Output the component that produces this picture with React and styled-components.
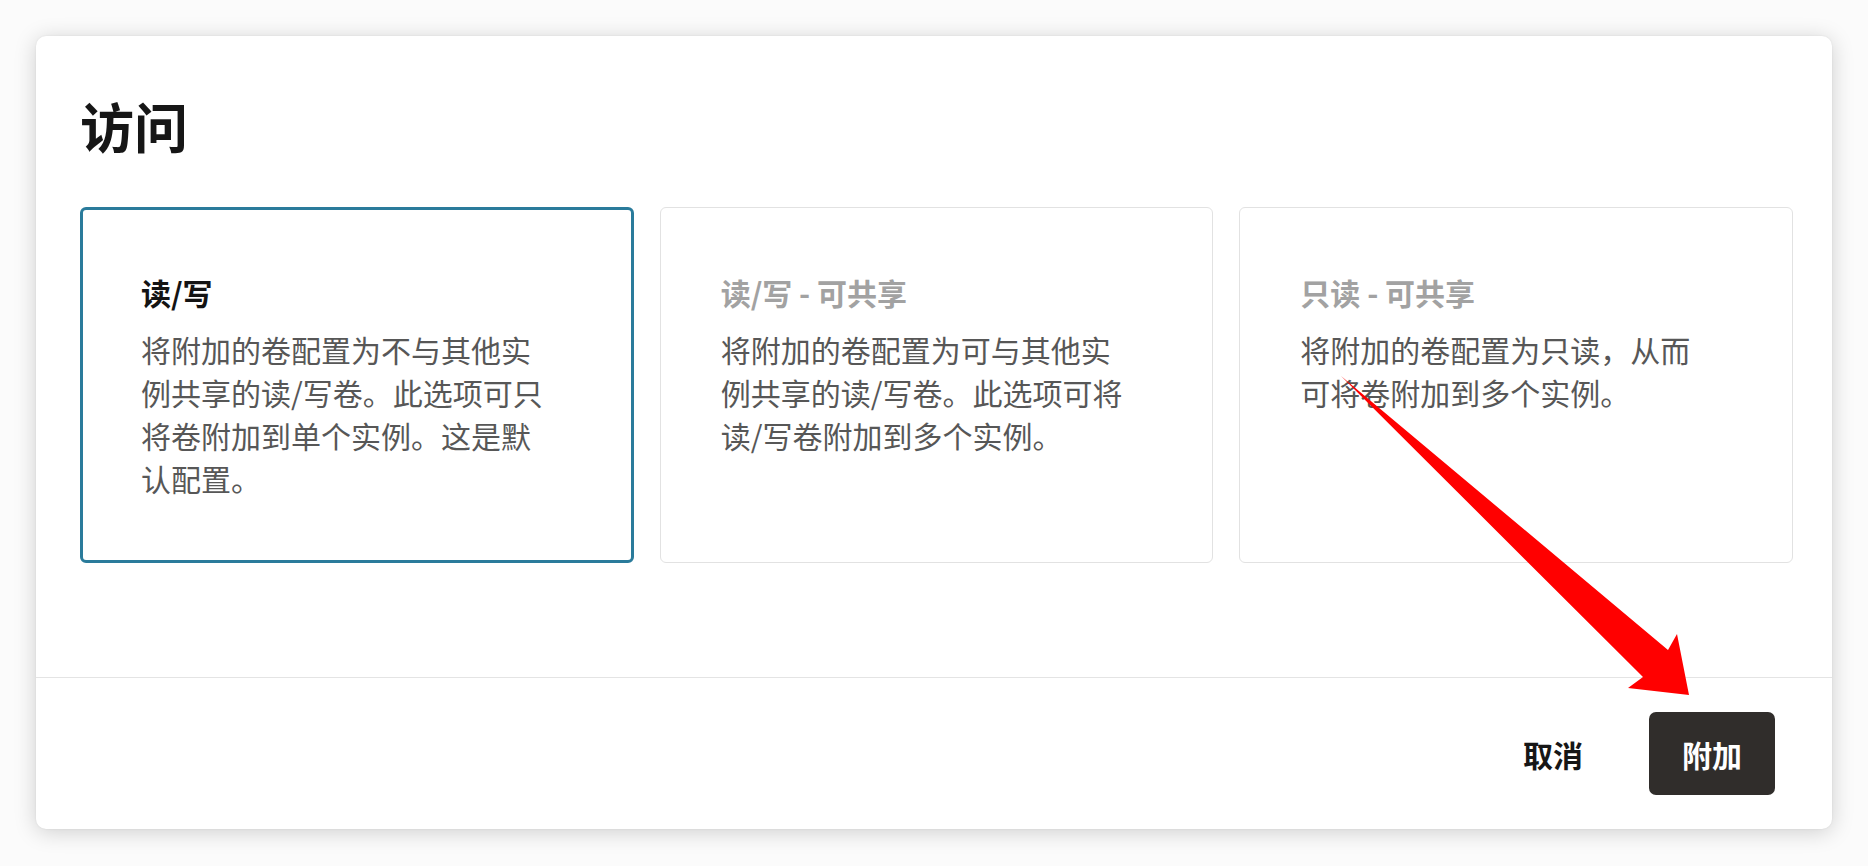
import React, {useState} from 'react';
import styled, {createGlobalStyle} from 'styled-components';

const GlobalStyle = createGlobalStyle`
  html, body {
    margin: 0;
    padding: 0;
    background-color: #fbfbfb;
    font-family: "Noto Sans CJK SC", "Noto Sans", sans-serif;
  }
`

const options = [
  {
    id: 'rw',
    title: '读/写',
    text: '将附加的卷配置为不与其他实例共享的读/写卷。此选项可只将卷附加到单个实例。这是默认配置。',
  },
  {
    id: 'rw-shared',
    title: '读/写 - 可共享',
    text: '将附加的卷配置为可与其他实例共享的读/写卷。此选项可将读/写卷附加到多个实例。',
  },
  {
    id: 'ro-shared',
    title: '只读 - 可共享',
    text: '将附加的卷配置为只读，从而可将卷附加到多个实例。',
  },
];

const App = () => {
  const [selected, setSelected] = useState('rw');

  return (
    <Page>
      <GlobalStyle />
      <Dialog>
        <Body>
          <Heading>访问</Heading>
          <OptionGrid>
            {options.map(o => {
              const active = o.id === selected;
              return (
                <OptionCard key={o.id} $active={active} onClick={() => setSelected(o.id)}>
                  <OptionTitle $active={active}>{o.title}</OptionTitle>
                  <OptionText>{o.text}</OptionText>
                </OptionCard>
              )
            })}
          </OptionGrid>
        </Body>
        <Footer>
          <CancelButton>取消</CancelButton>
          <PrimaryButton>附加</PrimaryButton>
        </Footer>
      </Dialog>
      <ArrowLayer width="1868" height="866" viewBox="0 0 1868 866">
        <polygon
          fill="#ff0000"
          points="1341,376 1668,650 1677,634 1689,695 1628,688 1643,677"
        />
      </ArrowLayer>
    </Page>
  )
}

export default App;

const Page = styled.div`
  position: relative;
  width: 1868px;
  height: 866px;
  box-sizing: border-box;
  padding: 36px;
  overflow: hidden;
`

const Dialog = styled.section`
  background-color: #ffffff;
  height: 793px;
  border-radius: 10px;
  box-shadow: 0 3px 22px rgba(0, 0, 0, .18), 0 0 2px rgba(0, 0, 0, .08);

  display: flex;
  flex-direction: column;
`

const Body = styled.div`
  flex: 1;
  padding: 57px 39px 0 44px;

  display: flex;
  flex-direction: column;
`

const Heading = styled.h1`
  margin: 0 0 49px 0;
  font-size: 54px;
  line-height: 65px;
  font-weight: 700;
  color: #161616;
`

const OptionGrid = styled.div`
  display: grid;
  grid-template-columns: repeat(3, 1fr);
  gap: 26px;
`

const OptionCard = styled.div`
  height: 356px;
  box-sizing: border-box;
  border-radius: 6px;
  border: ${p => p.$active ? '3px solid #2a7b9b' : '1px solid #e2e2e2'};
  padding: ${p => p.$active ? '61px 20px 0 58px' : '63px 20px 0 60px'};
  cursor: pointer;
`

const OptionTitle = styled.h3`
  margin: 0 0 14px 0;
  font-size: 30px;
  line-height: 43px;
  font-weight: 700;
  color: ${p => p.$active ? '#141414' : '#a2a2a2'};
`

const OptionText = styled.p`
  margin: 0;
  max-width: 410px;
  font-size: 30px;
  line-height: 43px;
  color: #575757;
`

const Footer = styled.footer`
  height: 152px;
  box-sizing: border-box;
  border-top: 1px solid #e4e4e4;
  padding-right: 57px;

  display: flex;
  justify-content: flex-end;
  align-items: center;
  gap: 33px;
`

const CancelButton = styled.button`
  height: 83px;
  padding: 0 33px;
  border: none;
  background: transparent;
  font-family: inherit;
  font-size: 30px;
  font-weight: 700;
  color: #161616;
  cursor: pointer;
`

const PrimaryButton = styled(CancelButton)`
  background-color: #302d2b;
  border-radius: 7px;
  color: #ffffff;
`

const ArrowLayer = styled.svg`
  position: absolute;
  top: 0;
  left: 0;
  pointer-events: none;
`
